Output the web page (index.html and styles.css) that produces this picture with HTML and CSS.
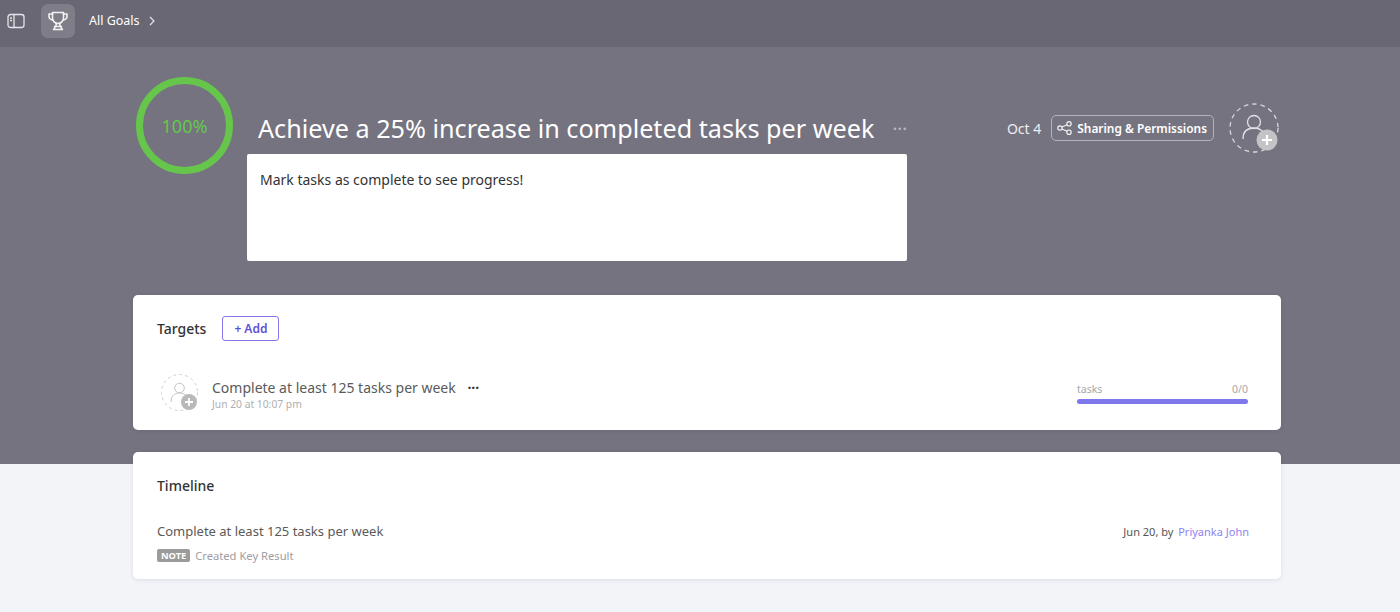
FILE: index.html
```html
<!DOCTYPE html>
<html lang="en">
<head>
    <meta charset="UTF-8">
    <title>All Goals</title>
    <link rel="stylesheet" href="styles.css">
</head>
<body>
    <div class="topbar">
        <svg class="panel-icon" width="18" height="16" viewBox="0 0 18 16" fill="none" stroke="#e6e6ea" stroke-width="1.3">
            <rect x="1" y="1.5" width="16" height="13" rx="2.5"/>
            <path d="M7 1.5v13M3 5h2M3 7.5h2"/>
        </svg>
        <div class="trophy-box">
            <svg width="22" height="22" viewBox="0 0 22 22" fill="none" stroke="#f2f2f4" stroke-width="1.6" stroke-linejoin="round" stroke-linecap="round">
                <path d="M5.500 2.500h11v5.500a5.500 5.500 0 0 1-11 0z"/>
                <path d="M5.500 4H2v2.500a3.500 3.500 0 0 0 3.800 3.400M16.500 4H20v2.500a3.500 3.500 0 0 1-3.800 3.400"/>
                <path d="M9.500 13.500c0 2-1 3.500-2.500 5.500M12.500 13.500c0 2 1 3.500 2.500 5.500M7.500 16.500h7M6.500 19.500h9"/>
            </svg>
        </div>
        <span class="crumb">All Goals</span>
        <svg width="8" height="10" viewBox="0 0 8 10" fill="none" stroke="#e6e6ea" stroke-width="1.200">
            <path d="M2 1l4 4-4 4"/>
        </svg>
    </div>

    <div class="page">
        <div class="goal-head">
            <div class="ring"><span>100%</span></div>
            <div class="goal-main">
                <div class="title-row">
                    <h1>Achieve a 25% increase in completed tasks per week</h1>
                    <span class="title-dots">···</span>
                </div>
                <div class="description">Mark tasks as complete to see progress!</div>
            </div>
            <div class="goal-meta">
                <span class="due">Oct 4</span>
                <div class="share-btn">
                    <svg width="15" height="14" viewBox="0 0 15 14" fill="none" stroke="#f2f2f4" stroke-width="1.200">
                        <circle cx="3" cy="7" r="2.200"/>
                        <circle cx="12" cy="2.800" r="2.200"/>
                        <circle cx="12" cy="11.200" r="2.200"/>
                        <path d="M5 6l5-2.300M5 8l5 2.300"/>
                    </svg>
                    Sharing &amp; Permissions
                </div>
                <div class="avatar avatar-lg">
                    <svg width="50" height="50" viewBox="0 0 50 50" fill="none">
                        <circle cx="25" cy="25" r="24" stroke="#d6d6da" stroke-width="1.300" stroke-dasharray="4.500 4"/>
                        <circle cx="25" cy="19" r="6.500" stroke="#e2e2e6" stroke-width="1.300"/>
                        <path d="M14 36c0-7 4-11 11-11 4 0 7 1.500 9 4" stroke="#e2e2e6" stroke-width="1.300"/>
                        <circle cx="38" cy="37" r="10.500" fill="#c4c4c6"/>
                        <path d="M38 32v10M33 37h10" stroke="#fff" stroke-width="2.200"/>
                    </svg>
                </div>
            </div>
        </div>

        <div class="card targets">
            <div class="card-head">
                <h2>Targets</h2>
                <div class="add-btn">+ Add</div>
            </div>
            <div class="target-row">
                <div class="avatar">
                    <svg width="38" height="38" viewBox="0 0 38 38" fill="none">
                        <circle cx="18.500" cy="18.500" r="18" stroke="#d0d0d0" stroke-width="1" stroke-dasharray="3 3"/>
                        <circle cx="18.500" cy="14" r="4.800" stroke="#c4c4c4" stroke-width="1"/>
                        <path d="M10 28c0-6 3.500-9 8.500-9 3 0 5 1 7 3" stroke="#c4c4c4" stroke-width="1"/>
                        <circle cx="28" cy="28" r="8" fill="#b9b9b9"/>
                        <path d="M28 24v8M24 28h8" stroke="#fff" stroke-width="1.800"/>
                    </svg>
                </div>
                <div class="target-text">
                    <div class="target-name">Complete at least 125 tasks per week <span class="target-dots">···</span></div>
                    <div class="target-date">Jun 20 at 10:07 pm</div>
                </div>
                <div class="progress">
                    <div class="progress-labels"><span>tasks</span><span>0/0</span></div>
                    <div class="progress-bar"></div>
                </div>
            </div>
        </div>

        <div class="card timeline">
            <h2>Timeline</h2>
            <div class="timeline-row">
                <div>
                    <div class="timeline-name">Complete at least 125 tasks per week</div>
                    <div class="timeline-note"><span class="note-tag">NOTE</span> Created Key Result</div>
                </div>
                <div class="timeline-by">Jun 20, by <a class="user-link">Priyanka John</a></div>
            </div>
        </div>
    </div>
</body>
</html>
```

FILE: styles.css
```css
* {
    box-sizing: border-box;
}

html, body {
    height: 100%;
}

body {
    margin: 0;
    overflow: hidden;
    font-family: "Noto Sans", "Open Sans", sans-serif;
    background: linear-gradient(#75737f 464px, #f2f4f8 464px);
    color: #3c3c3c;
}

h1, h2 {
    margin: 0;
    font-weight: 500;
}

.topbar {
    display: flex;
    align-items: center;
    height: 47px;
    padding: 0 0 6px 7px;
    background: #696774;
    color: #fff;
}

.trophy-box {
    display: flex;
    align-items: center;
    justify-content: center;
    width: 34px;
    height: 34px;
    margin: 0 14px 0 16px;
    border-radius: 7px;
    background: #7f7d88;
}

.crumb {
    font-size: 12.500px;
    margin-right: 8px;
}

.page {
    width: 1148px;
    margin-left: 133px;
}

.goal-head {
    display: flex;
    height: 248px;
    padding-top: 30px;
}

.ring {
    flex: none;
    display: flex;
    align-items: center;
    justify-content: center;
    width: 97px;
    height: 97px;
    margin-left: 3px;
    border: 7px solid #66c64c;
    border-radius: 50%;
    color: #66c64c;
    font-size: 18px;
}

.goal-main {
    flex: none;
    width: 660px;
    margin-left: 14px;
}

.title-row {
    display: flex;
    align-items: center;
    height: 77px;
    padding: 25px 0 0 11px;
}

h1 {
    color: #fff;
    font-size: 25.200px;
    font-weight: 400;
    white-space: nowrap;
}

.title-dots {
    margin-left: auto;
    color: #bdbcc3;
    font-size: 18px;
}

.description {
    height: 107px;
    padding: 16px 13px;
    border-radius: 2px;
    background: #fff;
    font-size: 14px;
    color: #333;
}

.goal-meta {
    display: flex;
    align-items: center;
    height: 50px;
    margin: 26px 2px 0 auto;
    color: #fff;
}

.due {
    font-size: 14px;
    color: #eeeef0;
    margin-right: 10px;
    white-space: nowrap;
}

.share-btn {
    display: flex;
    align-items: center;
    gap: 5px;
    height: 26px;
    padding: 0 6px 0 5px;
    margin-right: 15px;
    border: 1px solid #b5b4bb;
    border-radius: 5px;
    font-size: 11.900px;
    font-weight: 600;
    white-space: nowrap;
}

.avatar {
    flex: none;
    line-height: 0;
}

.card {
    border-radius: 5px;
    background: #fff;
    box-shadow: 0 1px 4px rgba(60, 60, 80, 0.12);
}

.targets {
    height: 135px;
    padding: 21px 33px 0 24px;
}

.card-head {
    display: flex;
    align-items: center;
    gap: 16px;
}

h2 {
    font-size: 14px;
    color: #333;
}

.add-btn {
    width: 57px;
    height: 25px;
    border: 1px solid #8677ee;
    border-radius: 3px;
    color: #5f4fd6;
    font-size: 12px;
    font-weight: 600;
    line-height: 23px;
    text-align: center;
}

.target-row {
    display: flex;
    align-items: center;
    margin-top: 33px;
    padding-left: 4px;
}

.target-text {
    margin-left: 13px;
    padding-top: 2px;
}

.target-name {
    font-size: 14px;
    line-height: 19px;
    color: #5a5a5a;
}

.target-dots {
    margin-left: 8px;
    color: #333;
    font-weight: 700;
}

.target-date {
    font-size: 10.300px;
    line-height: 14px;
    color: #b0b0b0;
}

.progress {
    width: 171px;
    margin-left: auto;
}

.progress-labels {
    display: flex;
    justify-content: space-between;
    font-size: 10.500px;
    line-height: 14px;
    color: #a8a8a8;
}

.progress-bar {
    height: 5px;
    margin-top: 3px;
    border-radius: 3px;
    background: #7f77ec;
}

.timeline {
    height: 127px;
    margin-top: 22px;
    padding: 24px 32px 0 24px;
}

.timeline-row {
    display: flex;
    justify-content: space-between;
    margin-top: 27px;
}

.timeline-name {
    font-size: 13px;
    line-height: 19px;
    color: #5a5a5a;
}

.timeline-note {
    display: flex;
    align-items: center;
    gap: 5px;
    margin-top: 7px;
    font-size: 11.200px;
    color: #a09ca4;
}

.note-tag {
    padding: 0 4px;
    border-radius: 2px;
    background: #9b9b9b;
    color: #fff;
    font-size: 9.300px;
    font-weight: 700;
    line-height: 13px;
}

.timeline-by {
    font-size: 11px;
    line-height: 19px;
    color: #555;
}

.user-link {
    margin-left: 2px;
    color: #8f83f0;
}
```
